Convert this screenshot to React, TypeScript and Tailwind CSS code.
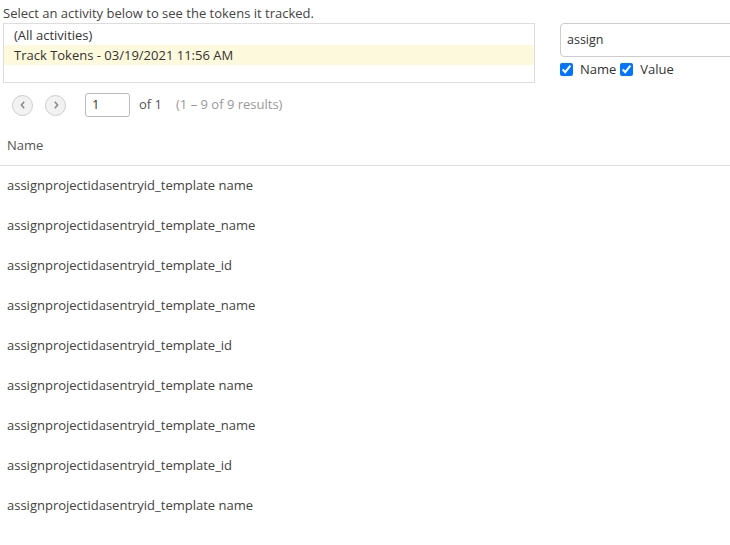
import React from "react";

const rows = [
  "assignprojectidasentryid_template name",
  "assignprojectidasentryid_template_name",
  "assignprojectidasentryid_template_id",
  "assignprojectidasentryid_template_name",
  "assignprojectidasentryid_template_id",
  "assignprojectidasentryid_template name",
  "assignprojectidasentryid_template_name",
  "assignprojectidasentryid_template_id",
  "assignprojectidasentryid_template name",
];

function Chevron({ dir }: { dir: "l" | "r" }) {
  return (
    <svg width="10" height="10" viewBox="0 0 10 10">
      <path
        d={dir === "l" ? "M6.2 1.8 L3.4 5 L6.2 8.2" : "M3.8 1.8 L6.6 5 L3.8 8.2"}
        fill="none"
        stroke="#8a8a8a"
        strokeWidth="1.6"
      />
    </svg>
  );
}

export default function App() {
  return (
    <div
      className="w-[730px] h-[545px] overflow-hidden bg-white text-[13px] text-[#333]"
      style={{ fontFamily: '"Open Sans", sans-serif' }}
    >
      <div className="pl-[3px] pt-[4px] leading-[18px] text-[#444]">
        Select an activity below to see the tokens it tracked.
      </div>
      <div className="flex mt-[1px]">
        <div className="shrink-0 ml-[3px] w-[532px] h-[60px] border border-[#ddd] py-[1px] leading-[20px]">
          <div className="pl-[10px] h-[20px]">(All activities)</div>
          <div className="pl-[10px] h-[20px] bg-[#fdf9dc]">Track Tokens - 03/19/2021 11:56 AM</div>
        </div>
        <div className="shrink-0 ml-[25px] flex flex-col">
          <div className="w-[200px] h-[34px] border border-[#ccc] rounded-[4px] flex items-center pl-[6px] text-[#333] text-[12.5px]">
            assign
          </div>
          <div className="flex items-center mt-[5px] leading-[14px]">
            <input type="checkbox" checked readOnly className="w-[13px] h-[13px] m-0" />
            <span className="ml-[7px]">Name</span>
            <input type="checkbox" checked readOnly className="w-[13px] h-[13px] m-0 ml-[4px]" />
            <span className="ml-[7px]">Value</span>
          </div>
        </div>
      </div>
      <div className="flex items-center mt-[10px] h-[24px]">
        <div className="ml-[12px] w-[21px] h-[21px] rounded-full border border-[#ccc] bg-[#f2f2f2] flex items-center justify-center">
          <Chevron dir="l" />
        </div>
        <div className="ml-[12px] w-[21px] h-[21px] rounded-full border border-[#ccc] bg-[#f2f2f2] flex items-center justify-center">
          <Chevron dir="r" />
        </div>
        <div className="ml-[19px] w-[45px] h-[24px] border border-[#bbb] rounded-[3px] flex items-center pl-[6px] text-[#333]">
          1
        </div>
        <span className="ml-[9px] text-[#555]">of 1</span>
        <span className="ml-[14px] text-[#999]">(1 – 9 of 9 results)</span>
      </div>
      <div className="mt-[9px] h-[40px] border-b border-[#ddd] flex items-center pl-[7px] text-[#555]">
        Name
      </div>
      {rows.map((r, i) => (
        <div key={i} className="h-[40px] flex items-center pl-[7px] text-[#444]">
          {r}
        </div>
      ))}
    </div>
  );
}
